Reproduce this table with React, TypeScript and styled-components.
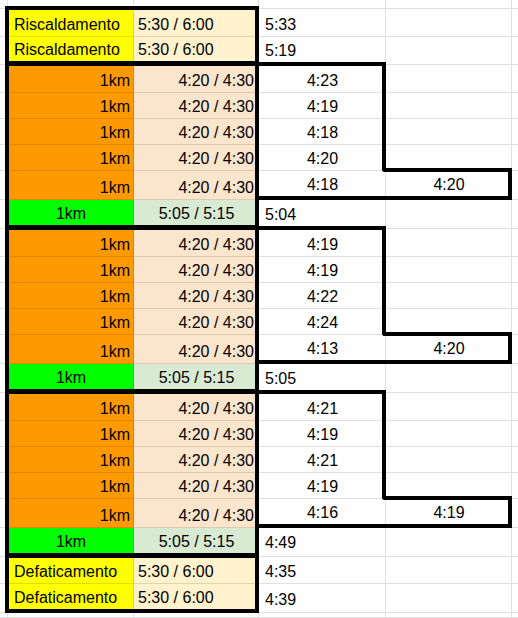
import React from "react";
import styled, { createGlobalStyle } from "styled-components";

const GRID = "rgba(0, 0, 0, 0.12)";
const YELLOW = "#ffff00";
const CREAM = "#fff2cc";
const ORANGE = "#ff9900";
const PEACH = "#fce5cd";
const GREEN = "#00ff00";
const SAGE = "#d9ead3";

type Align = "left" | "center" | "right";

type Spec = {
  text?: string;
  bg?: string;
  align?: Align;
  t?: boolean;
  r?: boolean;
  b?: boolean;
  l?: boolean;
  pl?: number;
  pr?: number;
  pb?: number;
  open?: boolean;
};

type RowSpec = { h: number; cells: Spec[] };

const GlobalStyle = createGlobalStyle`
  html, body {
    margin: 0;
    padding: 0;
    background: #fff;
  }
  body {
    font-family: "Liberation Sans", Arial, sans-serif;
  }
`;

const Sheet = styled.div<{ $rows: string }>`
  display: grid;
  grid-template-columns: 8px 126px 125px 127px 126px 6px;
  grid-template-rows: ${(p) => p.$rows};
  width: 518px;
  height: 618px;
  overflow: hidden;
  font-family: "Liberation Sans", Arial, sans-serif;
  font-size: 16px;
  color: #000;
`;

const JUSTIFY = { left: "flex-start", center: "center", right: "flex-end" };

const Cell = styled.div<{
  $bg: string;
  $align: Align;
  $t: boolean;
  $r: boolean;
  $b: boolean;
  $l: boolean;
  $pl: number;
  $pr: number;
  $pb: number;
  $open: boolean;
}>`
  position: relative;
  box-sizing: border-box;
  min-width: 0;
  display: flex;
  align-items: flex-end;
  justify-content: ${(p) => JUSTIFY[p.$align]};
  padding: 0 ${(p) => p.$pr}px ${(p) => p.$pb}px ${(p) => p.$pl}px;
  background: ${(p) => p.$bg};
  border-bottom: 1px solid ${GRID};
  border-right: ${(p) => (p.$open ? "none" : `1px solid ${GRID}`)};
  line-height: 18px;
  white-space: nowrap;

  /* thick sheet borders, drawn over the gridline */
  &::after {
    content: ${(p) => (p.$t || p.$r || p.$b || p.$l ? '""' : "none")};
    position: absolute;
    top: -3px;
    left: -3px;
    right: -1px;
    bottom: -1px;
    border-style: solid;
    border-color: #000;
    border-width: ${(p) =>
      `${p.$t ? 4 : 0}px ${p.$r ? 4 : 0}px ${p.$b ? 4 : 0}px ${p.$l ? 4 : 0}px`};
    z-index: 1;
    pointer-events: none;
  }
`;

const blank: Spec = {};
const edge: Spec = { open: true };

const warm = (i: number, actual: string, label: string): RowSpec => ({
  h: label === "Riscaldamento" ? 28 : i === 0 ? 27 : 29,
  cells: [
    blank,
    { text: label, bg: YELLOW, l: true, t: i === 0, b: i === 1, pl: 6, pb: i === 1 ? 5 : 2 },
    { text: "5:30 / 6:00", bg: CREAM, r: true, t: i === 0, b: i === 1, pb: i === 1 ? 5 : 2 },
    { text: actual, pl: 6, pb: i === 1 ? (label === "Riscaldamento" ? 4 : 3) : 2 },
    blank,
    edge,
  ],
});

const REP_H = [28, 26, 26, 26, 29];

const rep = (k: number, actual: string, avg: string): RowSpec => ({
  h: REP_H[k],
  cells: [
    blank,
    { text: "1km", bg: ORANGE, align: "right", l: true, t: k === 0, pr: 3 },
    { text: "4:20 / 4:30", bg: PEACH, align: "right", r: true, t: k === 0, pr: 4 },
    { text: actual, align: "center", t: k === 0, r: k < 4, b: k === 4, pb: k === 4 ? 5 : 2 },
    k === 4 ? { text: avg, align: "center", t: true, r: true, b: true, pb: 5 } : blank,
    edge,
  ],
});

const rec = (actual: string): RowSpec => ({
  h: 29,
  cells: [
    blank,
    { text: "1km", bg: GREEN, align: "center", l: true, b: true, pb: 5 },
    { text: "5:05 / 5:15", bg: SAGE, align: "center", r: true, b: true, pb: 5 },
    { text: actual, pl: 6, pb: 4 },
    blank,
    edge,
  ],
});

const series = [
  { laps: ["4:23", "4:19", "4:18", "4:20", "4:18"], avg: "4:20", rest: "5:04" },
  { laps: ["4:19", "4:19", "4:22", "4:24", "4:13"], avg: "4:20", rest: "5:05" },
  { laps: ["4:21", "4:19", "4:21", "4:19", "4:16"], avg: "4:19", rest: "4:49" },
];

const rows: RowSpec[] = [
  { h: 9, cells: [blank, blank, blank, blank, blank, edge] },
  warm(0, "5:33", "Riscaldamento"),
  warm(1, "5:19", "Riscaldamento"),
  ...series.flatMap((s) => [
    ...s.laps.map((lap, k) => rep(k, lap, s.avg)),
    rec(s.rest),
  ]),
  warm(0, "4:35", "Defaticamento"),
  warm(1, "4:39", "Defaticamento"),
  { h: 0, cells: [blank, blank, blank, blank, blank, edge] },
];

const template = rows
  .map((r, i) => (i === rows.length - 1 ? "1fr" : `${r.h}px`))
  .join(" ");

export default function App() {
  return (
    <>
      <GlobalStyle />
      <Sheet $rows={template}>
        {rows.map((row, i) =>
          row.cells.map((c, j) => (
            <Cell
              key={`${i}-${j}`}
              $bg={c.bg ?? "#fff"}
              $align={c.align ?? "left"}
              $t={!!c.t}
              $r={!!c.r}
              $b={!!c.b}
              $l={!!c.l}
              $pl={c.pl ?? 4}
              $pr={c.pr ?? 3}
              $pb={c.pb ?? 2}
              $open={!!c.open}
            >
              {c.text}
            </Cell>
          ))
        )}
      </Sheet>
    </>
  );
}
